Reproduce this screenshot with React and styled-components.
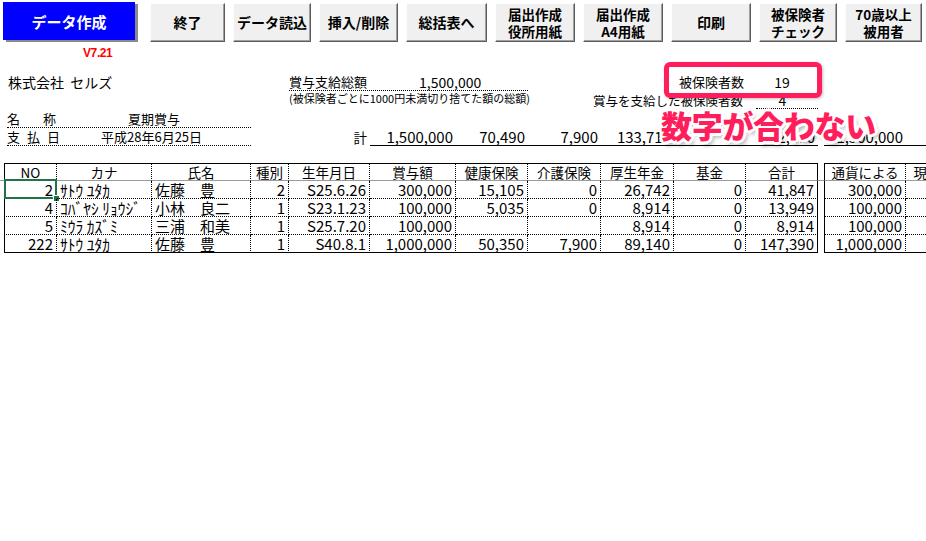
import React from 'react';
import styled, { createGlobalStyle, css } from 'styled-components';

// column widths shared by the info rows, the 計 row and the table (Excel-like sheet)
const COLS = '4px 53px 95px 99px 38px 81px 86px 72px 73px 73px 72px 72px 6px 82px 82px';
const PINK = '#ff1d5c';

const GlobalStyle = createGlobalStyle`
  html, body { margin: 0; padding: 0; background: #fff; }
  body {
    font-family: "Noto Sans CJK JP", "Noto Sans", sans-serif;
    color: #000;
    overflow: hidden;
  }
`;

const Page = styled.div`
  position: relative;
  width: 926px;
  height: 541px;
  overflow: hidden;
`;

const Toolbar = styled.div`
  display: flex;
  align-items: flex-start;
  padding: 2px 0 0 3px;
`;

const MainGroup = styled.div`
  display: flex;
  flex-direction: column;
`;

const MainButton = styled.button`
  width: 132px;
  height: 38px;
  padding: 0;
  border: none;
  background: #0000ff;
  color: #fff;
  box-shadow: 3px 2px 0 #8a8a8a;
  font-family: "Noto Sans CJK JP", sans-serif;
  font-weight: bold;
  font-size: 15px;
`;

const Version = styled.div`
  margin: 6px 0 0 80px;
  color: #ff0000;
  font-family: "Liberation Sans", sans-serif;
  font-weight: bold;
  font-size: 12px;
  line-height: 14px;
  letter-spacing: -0.4px;
`;

const ButtonRow = styled.div`
  display: flex;
  gap: 8px;
  margin: 1px 0 0 15px;
`;

const ToolButton = styled.button`
  width: ${p => p.$w}px;
  height: 39px;
  padding: 0;
  background: #f0f0f0;
  border: 1px solid;
  border-color: #fdfdfd #5c5c5c #5c5c5c #fdfdfd;
  box-shadow: inset -1px -1px 0 #a0a0a0;
  color: #000;
  font-family: "Noto Sans CJK JP", sans-serif;
  font-weight: bold;
  font-size: ${p => (p.$twoLine ? 13.5 : 14)}px;
  line-height: 17px;
  white-space: pre-line;
`;

const InfoGrid = styled.div`
  display: grid;
  grid-template-columns: ${COLS};
  grid-template-rows: 18px 18px 19px 18px;
  margin-top: 13px;
  font-size: 13px;
`;

const InfoCell = styled.div`
  grid-column: ${p => p.$col};
  grid-row: ${p => p.$row};
  display: flex;
  align-items: ${p => p.$valign || 'center'};
  justify-content: ${p => ({ left: 'flex-start', right: 'flex-end', center: 'center' })[p.$align || 'left']};
  padding: 0 3px;
  white-space: nowrap;
  font-size: ${p => p.$size || 13}px;
  line-height: 16px;
  border-bottom: ${p => (p.$line === 'dotted' ? '1px dotted #000' : p.$line === 'solid' ? '1px solid #000' : 'none')};
`;

const Amount = styled.span`
  margin-left: ${p => p.$offset}px;
  font-size: 14px;
`;

const Note = styled(InfoCell)`
  align-items: flex-start;
  font-size: 11px;
  line-height: 14px;
  padding-left: 0;
  overflow: visible;
`;

const LabelPair = styled.div`
  display: flex;
  align-items: center;
`;

const SpreadLabel = styled.span`
  display: inline-flex;
  gap: ${p => p.$gap}px;
  width: ${p => p.$w}px;
`;

const SumTotalLabel = styled(InfoCell)`
  font-size: 13.5px;
`;

const SumValue = styled(InfoCell)`
  font-size: 15px;
`;

const Table = styled.div`
  display: grid;
  grid-template-columns: ${COLS};
  grid-auto-rows: 18px;
  margin-top: 17px;
`;

const selectedCell = css`
  &::before {
    content: '';
    position: absolute;
    top: -2px;
    left: -1px;
    right: -1px;
    bottom: -1px;
    border: 2px solid #217346;
    pointer-events: none;
  }
  &::after {
    content: '';
    position: absolute;
    right: -4px;
    bottom: -4px;
    width: 5px;
    height: 5px;
    background: #217346;
    border: 1px solid #fff;
  }
`;

const TCell = styled.div`
  position: relative;
  box-sizing: border-box;
  display: flex;
  align-items: center;
  justify-content: ${p => ({ left: 'flex-start', right: 'flex-end', center: 'center' })[p.$align || 'left']};
  padding: 0 3px;
  white-space: nowrap;
  font-size: ${p => p.$size || 15}px;
  line-height: 16px;
  border-left: ${p => (p.$start ? '1px solid #000' : 'none')};
  border-right: ${p => (p.$blank || p.$open ? 'none' : p.$end ? '1px solid #000' : '1px dotted #000')};
  border-top: ${p => (p.$head && !p.$blank ? '1px solid #000' : 'none')};
  border-bottom: ${p =>
    p.$head ? '1px solid #9c9c9c' : p.$blank ? 'none' : p.$last ? '1px solid #000' : '1px dotted #000'};
  ${p => p.$selected && selectedCell}
`;

const HighlightBox = styled.div`
  position: absolute;
  left: 664px;
  top: 62px;
  width: 158px;
  height: 36px;
  box-sizing: border-box;
  border: 5px solid ${PINK};
  border-radius: 6px;
  box-shadow: 1px 1px 3px rgba(0, 0, 0, 0.25);
  pointer-events: none;
`;

const Callout = styled.div`
  position: absolute;
  left: 661px;
  top: 105px;
  color: ${PINK};
  font-family: "Noto Sans CJK JP", sans-serif;
  font-weight: 900;
  font-size: 31px;
  line-height: 40px;
  letter-spacing: -0.3px;
  white-space: nowrap;
  text-shadow:
    2px 0 0 #fff, -2px 0 0 #fff, 0 2px 0 #fff, 0 -2px 0 #fff,
    3px 0 0 #fff, -3px 0 0 #fff, 0 3px 0 #fff, 0 -3px 0 #fff,
    2px 2px 0 #fff, -2px -2px 0 #fff, 2px -2px 0 #fff, -2px 2px 0 #fff,
    3px 4px 4px rgba(0, 0, 0, 0.35);
`;

const toolButtons = [
  { w: 75, label: '終了' },
  { w: 78, label: 'データ読込' },
  { w: 79, label: '挿入/削除' },
  { w: 81, label: '総括表へ' },
  { w: 80, label: '届出作成\n役所用紙', two: true },
  { w: 80, label: '届出作成\nA4用紙', two: true },
  { w: 80, label: '印刷' },
  { w: 78, label: '被保険者\nチェック', two: true },
  { w: 77, label: '70歳以上\n被用者', two: true },
];

const columns = [
  { key: 'lead', blank: true },
  { key: 'no', label: 'NO', align: 'right', start: true, size: 15 },
  { key: 'kana', label: 'カナ', align: 'left', size: 15.5 },
  { key: 'name', label: '氏名', align: 'left', size: 15 },
  { key: 'kind', label: '種別', align: 'right' },
  { key: 'birth', label: '生年月日', align: 'right' },
  { key: 'bonus', label: '賞与額', align: 'right' },
  { key: 'health', label: '健康保険', align: 'right' },
  { key: 'care', label: '介護保険', align: 'right' },
  { key: 'pension', label: '厚生年金', align: 'right' },
  { key: 'fund', label: '基金', align: 'right' },
  { key: 'sum', label: '合計', align: 'right', end: true },
  { key: 'gap', blank: true },
  { key: 'cash', label: '通貨による', align: 'right', start: true },
  { key: 'goods', label: '現物による', align: 'right', open: true },
];

const rows = [
  { no: '2', kana: 'ｻﾄｳ ﾕﾀｶ', name: '佐藤　豊', kind: '2', birth: 'S25.6.26', bonus: '300,000', health: '15,105', care: '0', pension: '26,742', fund: '0', sum: '41,847', cash: '300,000' },
  { no: '4', kana: 'ｺﾊﾞﾔｼ ﾘｮｳｼﾞ', name: '小林　良二', kind: '1', birth: 'S23.1.23', bonus: '100,000', health: '5,035', care: '0', pension: '8,914', fund: '0', sum: '13,949', cash: '100,000' },
  { no: '5', kana: 'ﾐｳﾗ ｶｽﾞﾐ', name: '三浦　和美', kind: '1', birth: 'S25.7.20', bonus: '100,000', health: '', care: '', pension: '8,914', fund: '0', sum: '8,914', cash: '100,000' },
  { no: '222', kana: 'ｻﾄｳ ﾕﾀｶ', name: '佐藤　豊', kind: '1', birth: 'S40.8.1', bonus: '1,000,000', health: '50,350', care: '7,900', pension: '89,140', fund: '0', sum: '147,390', cash: '1,000,000' },
];

const totals = [
  { col: '7 / 8', value: '1,500,000' },
  { col: '8 / 9', value: '70,490' },
  { col: '9 / 10', value: '7,900' },
  { col: '10 / 11', value: '133,710' },
  { col: '11 / 12', value: '0' },
  { col: '12 / 13', value: '212,100' },
  { col: '14 / 15', value: '1,500,000' },
];

export default function App() {
  return (
    <Page>
      <GlobalStyle />
      <Toolbar>
        <MainGroup>
          <MainButton>データ作成</MainButton>
          <Version>V7.21</Version>
        </MainGroup>
        <ButtonRow>
          {toolButtons.map(b => (
            <ToolButton key={b.label} $w={b.w} $twoLine={b.two}>{b.label}</ToolButton>
          ))}
        </ButtonRow>
      </Toolbar>

      <InfoGrid>
        <InfoCell $col="2 / 5" $row="1" $size={14} style={{ paddingLeft: 4 }}>株式会社&nbsp;&nbsp;セルズ</InfoCell>
        <InfoCell $col="6 / 9" $row="1" $line="dotted" style={{ paddingLeft: 0 }}>
          賞与支給総額<Amount $offset={52}>1,500,000</Amount>
        </InfoCell>
        <InfoCell $col="11 / 12" $row="1" style={{ paddingLeft: 5 }}>被保険者数</InfoCell>
        <InfoCell $col="12 / 13" $row="1" $align="center" $size={14}>19</InfoCell>

        <Note $col="6 / 9" $row="2">(被保険者ごとに1000円未満切り捨てた額の総額)</Note>
        <InfoCell $col="9 / 12" $row="2" $align="right" $valign="flex-end" $size={12.5}>賞与を支給した被保険者数</InfoCell>
        <InfoCell $col="12 / 13" $row="2" $align="center" $valign="flex-end" $line="dotted" $size={14} style={{ marginLeft: 10, paddingRight: 12 }}>4</InfoCell>

        <InfoCell $col="2 / 5" $row="3" $line="dotted" $valign="flex-end" style={{ marginLeft: 3, paddingLeft: 0 }}>
          <LabelPair>
            <SpreadLabel $gap={23} $w={121}><span>名</span><span>称</span></SpreadLabel>
            <span>夏期賞与</span>
          </LabelPair>
        </InfoCell>

        <InfoCell $col="2 / 5" $row="4" $line="dotted" style={{ marginLeft: 3, paddingLeft: 0 }}>
          <LabelPair>
            <SpreadLabel $gap={7} $w={94}><span>支</span><span>払</span><span>日</span></SpreadLabel>
            <span>平成28年6月25日</span>
          </LabelPair>
        </InfoCell>
        <SumTotalLabel $col="6 / 7" $row="4" $align="right">計</SumTotalLabel>
        <InfoCell $col="7 / 13" $row="4" $line="solid" />
        <InfoCell $col="14 / 16" $row="4" $line="solid" />
        {totals.map(t => (
          <SumValue key={t.col} $col={t.col} $row="4" $align="right">{t.value}</SumValue>
        ))}
      </InfoGrid>

      <Table>
        {columns.map(c => (
          <TCell
            key={'h-' + c.key}
            $head
            $blank={c.blank}
            $start={c.start}
            $end={c.end}
            $open={c.open}
            $align="center"
            $size={13.5}
          >
            {c.label}
          </TCell>
        ))}
        {rows.map((r, ri) =>
          columns.map(c => (
            <TCell
              key={ri + '-' + c.key}
              $blank={c.blank}
              $start={c.start}
              $end={c.end}
              $open={c.open}
              $align={c.align}
              $size={c.size}
              $last={ri === rows.length - 1}
              $selected={ri === 0 && c.key === 'no'}
            >
              {c.blank ? '' : r[c.key]}
            </TCell>
          ))
        )}
      </Table>

      <HighlightBox />
      <Callout>数字が合わない</Callout>
    </Page>
  );
}
